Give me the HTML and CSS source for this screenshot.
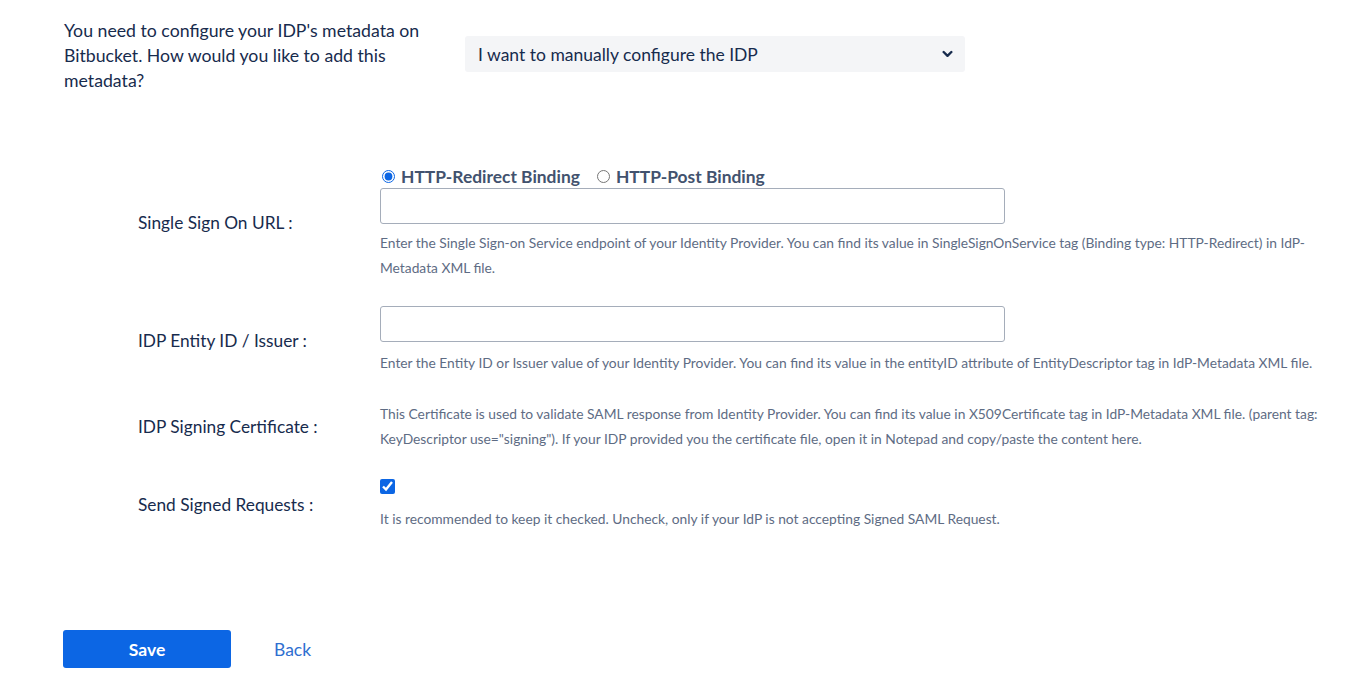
FILE: index.html
```html
<!DOCTYPE html>
<html lang="en">

<head>
    <meta charset="UTF-8">
    <meta name="viewport" content="width=device-width, initial-scale=1.0">
    <title>Configure IDP</title>
    <link rel="stylesheet" href="styles.css">
</head>

<body>
    <div class="page">
        <div class="intro">
            <p class="intro-text">You need to configure your IDP's metadata on Bitbucket. How would you like to add this metadata?</p>
            <div class="select">
                <span>I want to manually configure the IDP</span>
                <svg class="chevron" viewBox="0 0 12 8" width="11" height="8">
                    <path d="M1.8 1.8 L6 6 L10.2 1.8" fill="none" stroke="#172b4d" stroke-width="2.6" stroke-linecap="round" stroke-linejoin="round"/>
                </svg>
            </div>
        </div>

        <div class="form">
            <div class="form-row">
                <label class="form-label">Single Sign On URL :</label>
                <div class="form-field">
                    <div class="binding">
                        <label><input type="radio" name="binding" checked> HTTP-Redirect Binding</label>
                        <label><input type="radio" name="binding"> HTTP-Post Binding</label>
                    </div>
                    <input type="text" class="text-input">
                    <p class="help">Enter the Single Sign-on Service endpoint of your Identity Provider. You can find its value in SingleSignOnService tag (Binding type: HTTP-Redirect) in IdP-Metadata XML file.</p>
                </div>
            </div>

            <div class="form-row">
                <label class="form-label">IDP Entity ID / Issuer :</label>
                <div class="form-field">
                    <input type="text" class="text-input">
                    <p class="help help-low">Enter the Entity ID or Issuer value of your Identity Provider. You can find its value in the entityID attribute of EntityDescriptor tag in IdP-Metadata XML file.</p>
                </div>
            </div>

            <div class="form-row">
                <label class="form-label">IDP Signing Certificate :</label>
                <div class="form-field">
                    <p class="help help-only">This Certificate is used to validate SAML response from Identity Provider. You can find its value in X509Certificate tag in IdP-Metadata XML file. (parent tag: KeyDescriptor use="signing"). If your IDP provided you the certificate file, open it in Notepad and copy/paste the content here.</p>
                </div>
            </div>

            <div class="form-row">
                <label class="form-label">Send Signed Requests :</label>
                <div class="form-field">
                    <input type="checkbox" class="checkbox" checked>
                    <p class="help">It is recommended to keep it checked. Uncheck, only if your IdP is not accepting Signed SAML Request.</p>
                </div>
            </div>
        </div>

        <div class="actions">
            <button class="btn-save">Save</button>
            <a href="#" class="back-link">Back</a>
        </div>
    </div>
</body>

</html>
```

FILE: styles.css
```css
body {
    margin: 0;
    font-family: Lato, "Noto Sans", sans-serif;
    color: #172b4d;
    background: #fff;
}

.page {
    padding: 18px 0 0 64px;
}

.intro {
    display: flex;
    align-items: flex-start;
}

.intro-text {
    margin: 0;
    width: 370px;
    font-size: 17.7px;
    line-height: 25px;
}

.select {
    margin: 18px 0 0 31px;
    width: 500px;
    height: 36px;
    box-sizing: border-box;
    padding: 0 12px 0 13px;
    background: #f4f5f7;
    border-radius: 3px;
    display: flex;
    align-items: center;
    justify-content: space-between;
    font-size: 17.5px;
}

.form {
    margin-top: 71px;
    padding-left: 74px;
    display: flex;
    flex-direction: column;
    gap: 26px;
}

.form-row {
    display: flex;
    align-items: center;
}

.form-label {
    width: 242px;
    flex-shrink: 0;
    font-size: 17.3px;
}

.form-field {
    flex: 1;
    padding-right: 40px;
}

.binding {
    display: flex;
    gap: 15px;
    height: 24px;
    align-items: center;
    font-size: 17.4px;
    font-weight: 700;
    color: #42526e;
}

.binding label {
    display: flex;
    align-items: center;
    gap: 6px;
}

.binding input {
    margin: 0 0 0 2px;
    width: 13px;
    height: 13px;
    accent-color: #0c66e4;
}

.text-input {
    display: block;
    width: 625px;
    height: 36px;
    box-sizing: border-box;
    border: 1px solid #a5adba;
    border-radius: 3px;
    margin: 0;
}

.help {
    margin: 6px 0 0;
    font-size: 13.8px;
    line-height: 25px;
    color: #5e6c84;
}

.help-low {
    margin-top: 8px;
}

.help-only {
    margin: 0;
}

.checkbox {
    display: block;
    margin: 2px 0 0;
    width: 15px;
    height: 15px;
    accent-color: #0c66e4;
}

.checkbox + .help {
    margin-top: 12px;
}

.actions {
    margin: 99px 0 0 -1px;
    display: flex;
    align-items: center;
    gap: 43px;
}

.btn-save {
    width: 168px;
    height: 38px;
    border: none;
    border-radius: 3px;
    background: #0c66e4;
    color: #fff;
    font-family: inherit;
    font-size: 17.5px;
    font-weight: 700;
}

.back-link {
    color: #2f6fd0;
    text-decoration: none;
    font-size: 17.5px;
}
```
